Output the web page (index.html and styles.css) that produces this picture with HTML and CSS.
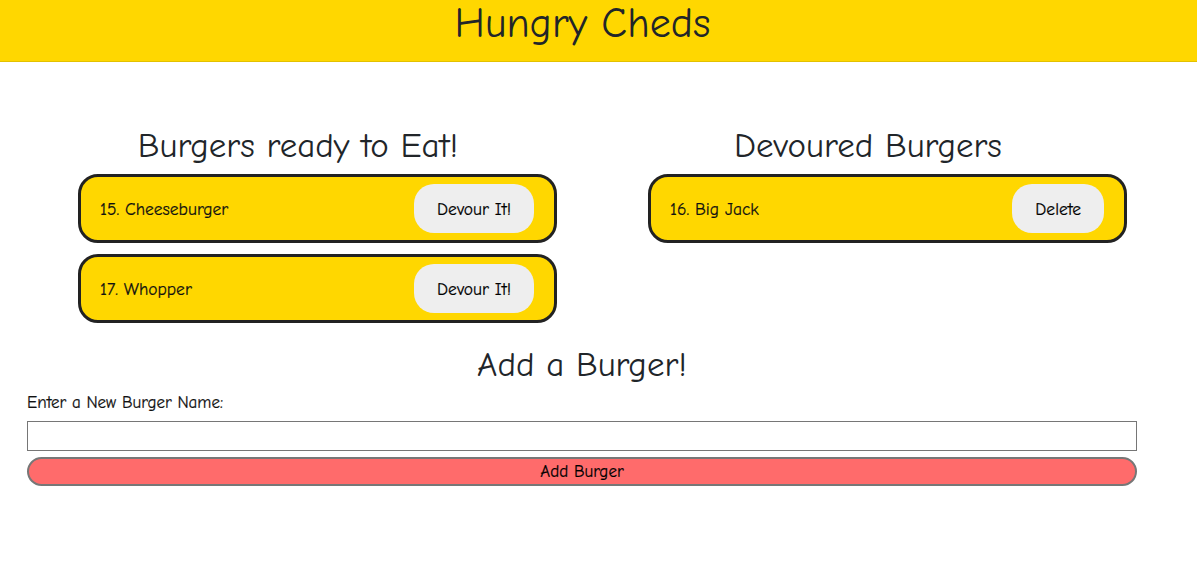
FILE: index.html
```html
<!DOCTYPE html>
<html lang="en">
<head>
<meta charset="utf-8">
<title>Hungry Cheds</title>
<link rel="stylesheet" href="styles.css">
</head>
<body>
<header class="site-header">
  <div class="header-inner">
    <h1 class="title">Hungry Cheds</h1>
  </div>
</header>
<main class="page">
  <section class="columns">
    <div class="col">
      <h2 class="col-title">Burgers ready to Eat!</h2>
      <ul class="burger-list">
        <li class="burger-card">
          <span class="burger-name">15. Cheeseburger</span>
          <button class="card-btn" type="button">Devour It!</button>
        </li>
        <li class="burger-card">
          <span class="burger-name">17. Whopper</span>
          <button class="card-btn" type="button">Devour It!</button>
        </li>
      </ul>
    </div>
    <div class="col">
      <h2 class="col-title">Devoured Burgers</h2>
      <ul class="burger-list">
        <li class="burger-card">
          <span class="burger-name">16. Big Jack</span>
          <button class="card-btn" type="button">Delete</button>
        </li>
      </ul>
    </div>
  </section>
  <section class="add">
    <h2 class="add-title">Add a Burger!</h2>
    <form class="add-form">
      <label class="add-label" for="burger">Enter a New Burger Name:</label>
      <input class="add-input" id="burger" type="text">
      <button class="add-btn" type="button">Add Burger</button>
    </form>
  </section>
</main>
</body>
</html>
```
FILE: styles.css
```css
* { box-sizing: border-box; }
html, body { margin: 0; padding: 0; }
body {
  font-family: "Comic Sans MS", "Comic Neue", "Open Sans", sans-serif;
  color: #212529;
  background: #fff;
  width: 1197px;
}
.site-header {
  background: #ffd700;
  border-bottom: 1px solid #e3c100;
  height: 62px;
}
.header-inner {
  width: 1165px;
  display: flex;
  justify-content: center;
}
.title {
  margin: 0;
  font-weight: 400;
  font-size: 42px;
  line-height: 48px;
}
.page {
  width: 1165px;
}
.columns {
  display: grid;
  grid-template-columns: 570px 570px;
  padding-left: 13px;
  padding-top: 64px;
}
.col { display: flex; flex-direction: column; }
.col-title {
  margin: 0 0 8px;
  text-align: center;
  font-weight: 400;
  font-size: 35px;
  line-height: 40px;
}
.burger-list {
  list-style: none;
  margin: 0;
  padding: 0 0 0 65px;
  display: flex;
  flex-direction: column;
  gap: 11px;
}
.burger-card {
  width: 479px;
  height: 69px;
  background: #ffd700;
  border: 3px solid #222;
  border-radius: 20px;
  display: flex;
  align-items: center;
  justify-content: space-between;
  padding: 0 20px 0 19px;
}
.burger-name {
  font-size: 17.5px;
  color: #111;
  -webkit-text-stroke: 0.2px #111;
}
.card-btn {
  font: inherit;
  font-size: 17.5px;
  color: #000;
  -webkit-text-stroke: 0.2px #000;
  background: #eeeeee;
  border: none;
  border-radius: 20px;
  height: 49px;
  padding: 0 23px;
}
.add {
  padding: 22px 28px 0 27px;
  display: flex;
  flex-direction: column;
}
.add-title {
  margin: 0;
  text-align: center;
  font-weight: 400;
  font-size: 35px;
  line-height: 40px;
}
.add-form {
  display: flex;
  flex-direction: column;
  width: 1110px;
}
.add-label {
  font-size: 17px;
  line-height: 22px;
  margin: 7px 0 7px;
  color: #111;
  -webkit-text-stroke: 0.2px #111;
}
.add-input {
  height: 30px;
  border: 1px solid #767676;
  border-radius: 0;
  font: inherit;
}
.add-btn {
  margin-top: 6px;
  height: 29px;
  font: inherit;
  font-size: 17px;
  color: #000;
  -webkit-text-stroke: 0.2px #000;
  background: #ff6b6b;
  border: 2px solid #777;
  border-radius: 15px;
}
```
